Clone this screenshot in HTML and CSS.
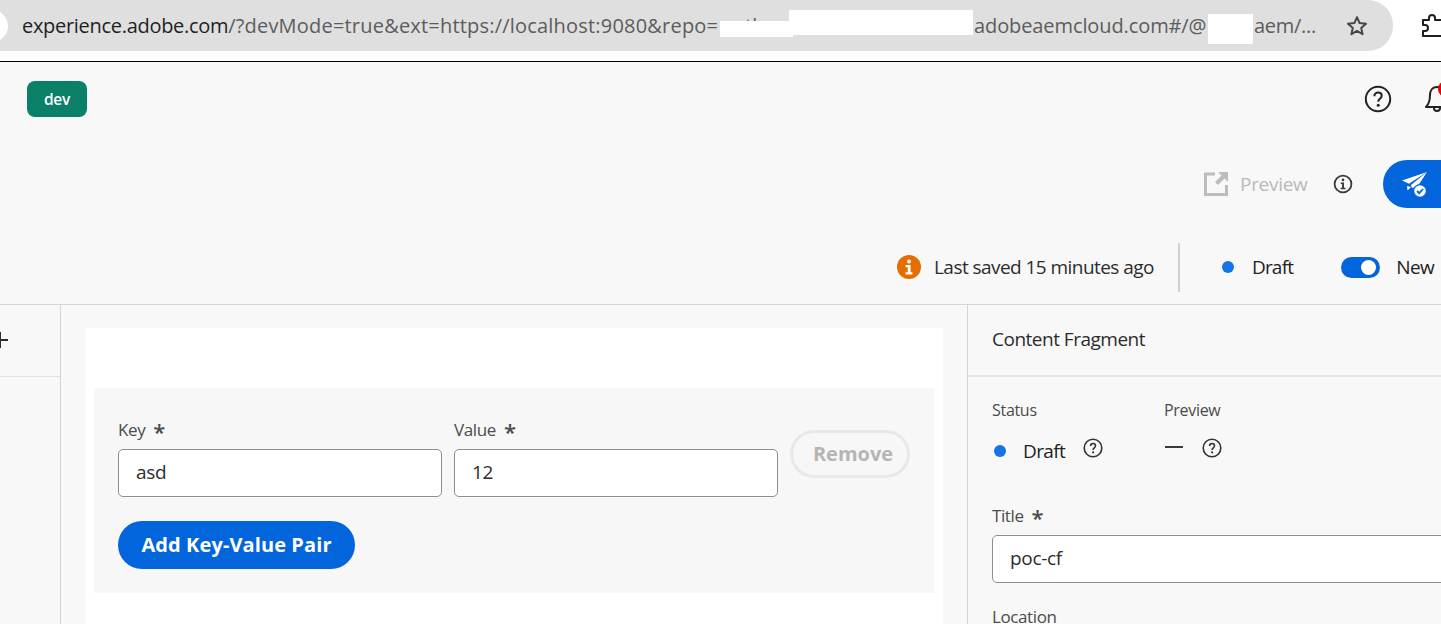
FILE: index.html
```html
<!DOCTYPE html>
<html lang="en">
<head>
<meta charset="utf-8">
<title>Content Fragment</title>
<link rel="stylesheet" href="styles.css">
</head>
<body>
<div class="browser">
  <div class="addressbar">
    <span class="site-dot"></span>
    <span class="url"><span class="host">experience.adobe.com</span>/?devMode=true&amp;ext=https://localhost:9080&amp;repo=</span>
    <span class="url url-th">th</span>
    <span class="mask mask-a"></span>
    <span class="mask mask-b"></span>
    <span class="url url-b">adobeaemcloud.com#/@</span>
    <span class="mask mask-c"></span>
    <span class="url url-c">aem/...</span>
    <svg class="star" viewBox="0 0 24 24" width="24" height="24"><path d="M12 3.200l2.600 5.900 6.400.6-4.800 4.200 1.400 6.300-5.600-3.300-5.600 3.300 1.400-6.300L3 9.700l6.400-.6z" fill="none" stroke="#474747" stroke-width="2" stroke-linejoin="round"/></svg>
  </div>
  <svg class="ext" viewBox="0 0 24 24" width="24" height="24"><path d="M1 6h6V4a3 3 0 0 1 6 0v2h10v16H1v-5h2a2 2 0 0 0 0-6H1z" fill="none" stroke="#1f1f1f" stroke-width="2" stroke-linejoin="round"/></svg>
</div>
<div class="app">
  <header class="topbar">
    <span class="env">dev</span>
    <div class="top-actions">
      <svg class="ico" viewBox="0 0 28 28" width="28" height="28"><circle cx="14" cy="14" r="12.200" fill="none" stroke="#222" stroke-width="2"/><path d="M10.400 11.200c0-2.300 1.600-3.600 3.700-3.600s3.600 1.300 3.600 3.200c0 2.900-3.500 3-3.500 5.900" fill="none" stroke="#222" stroke-width="2"/><circle cx="14.200" cy="20.200" r="1.500" fill="#222"/></svg>
      <span class="bell">
        <svg viewBox="0 0 28 30" width="28" height="30"><path d="M14 3c-5 0-7 4-7 8 0 6-1 9-4 12h22c-3-3-4-6-4-12 0-4-2-8-7-8z" fill="none" stroke="#222" stroke-width="2" stroke-linejoin="round"/><path d="M11 24a3 3 0 0 0 6 0" fill="none" stroke="#222" stroke-width="2"/></svg>
        <span class="bell-badge"></span>
      </span>
    </div>
  </header>
  <div class="toolbar">
    <span class="preview">
      <svg viewBox="0 0 24 24" width="24" height="24"><path d="M11 2H1.500v20.500H22.500V13" fill="none" stroke="#bcbcbc" stroke-width="3"/><path d="M14 0h10v10l-3.500-3.500-6.500 6.500-3-3 6.500-6.500z" fill="#bcbcbc"/></svg>
      Preview
    </span>
    <svg class="info" viewBox="0 0 20 20" width="20" height="20"><circle cx="10" cy="10" r="8.400" fill="none" stroke="#3b3b3b" stroke-width="1.800"/><circle cx="10" cy="5.900" r="1.300" fill="#3b3b3b"/><path d="M7.800 8.600H11v5.200h1.500v1.400H7.600v-1.400h1.500V10H7.800z" fill="#3b3b3b"/></svg>
    <span class="publish">
      <svg viewBox="0 0 28 28" width="28" height="28"><path d="M27 2L2 10.500l7 3.200z" fill="#fff"/><path d="M27 2L11 15l1 3 5.500-1.500z" fill="#fff"/><path d="M7 16l4 1-3.500 3.500z" fill="#fff"/><circle cx="20" cy="21" r="7" fill="#0265dc"/><circle cx="20" cy="21" r="5.800" fill="#fff"/><path d="M17 21l2.200 2.200 3.800-4.200" fill="none" stroke="#0265dc" stroke-width="1.800"/></svg>
    </span>
  </div>
  <div class="statusbar">
    <svg class="warn" viewBox="0 0 24 24" width="24" height="24"><circle cx="12" cy="12" r="12" fill="#e46f00"/><circle cx="12" cy="6.600" r="2" fill="#fff"/><path d="M8.600 10h5v7.200h1.800v2.200H8.600v-2.200h2.200V12.200H8.600z" fill="#fff"/></svg>
    <span class="saved">Last saved 15 minutes ago</span>
    <span class="vrule"></span>
    <span class="dot"></span>
    <span class="draft-top">Draft</span>
    <span class="toggle"><span class="knob"></span></span>
    <span class="new">New</span>
  </div>
  <main class="workspace">
    <aside class="rail">
      <div class="rail-head"><span class="plus"></span></div>
    </aside>
    <section class="canvas">
      <div class="card">
        <div class="pairs">
          <div class="pair">
            <div class="field field-key">
              <label class="label">Key <span class="req">*</span></label>
              <div class="input">asd</div>
            </div>
            <div class="field">
              <label class="label">Value <span class="req">*</span></label>
              <div class="input">12</div>
            </div>
            <span class="remove">Remove</span>
          </div>
          <span class="add">Add Key-Value Pair</span>
        </div>
      </div>
    </section>
    <aside class="panel">
      <div class="panel-head">Content Fragment</div>
      <div class="panel-body">
        <div class="meta">
          <div class="meta-col meta-status">
            <div class="label-sm">Status</div>
            <div class="meta-val">
              <span class="dot"></span><span class="draft">Draft</span>
              <svg class="help" viewBox="0 0 20 20" width="20" height="20"><circle cx="10" cy="10" r="8.800" fill="none" stroke="#333" stroke-width="1.600"/><path d="M7.600 8c0-1.500 1-2.500 2.500-2.500S12.500 6.400 12.500 7.800c0 2-2.400 2.100-2.400 4.200" fill="none" stroke="#333" stroke-width="1.600"/><circle cx="10.100" cy="14.300" r="1.100" fill="#333"/></svg>
            </div>
          </div>
          <div class="meta-col">
            <div class="label-sm">Preview</div>
            <div class="meta-val">
              <span class="dash"></span>
              <svg class="help" viewBox="0 0 20 20" width="20" height="20"><circle cx="10" cy="10" r="8.800" fill="none" stroke="#333" stroke-width="1.600"/><path d="M7.600 8c0-1.500 1-2.500 2.500-2.500S12.500 6.400 12.500 7.800c0 2-2.400 2.100-2.400 4.200" fill="none" stroke="#333" stroke-width="1.600"/><circle cx="10.100" cy="14.300" r="1.100" fill="#333"/></svg>
            </div>
          </div>
        </div>
        <label class="label title-label">Title <span class="req">*</span></label>
        <div class="input title-input">poc-cf</div>
        <div class="location">Location</div>
      </div>
    </aside>
  </main>
</div>
</body>
</html>
```
FILE: styles.css
```css
* { box-sizing: border-box; }
html, body { margin: 0; height: 624px; overflow: hidden; }
body { width: 1441px; background: #fff; font-family: "Open Sans", "Noto Sans", sans-serif; color: #222; }

.browser { height: 62px; border-bottom: 1px solid #000; background: #fff; padding-bottom: 9px; display: flex; }
.addressbar { position: relative; width: 1393px; height: 51px; background: #dfdfdf; border-radius: 0 25px 25px 0; display: flex; align-items: center; padding-left: 22px; flex: none; }
.site-dot { position: absolute; left: -24px; top: 10px; width: 32px; height: 32px; border-radius: 50%; background: #fff; }
.url { font-size: 20px; letter-spacing: 0.2px; color: #5c5c5c; white-space: nowrap; width: 698px; flex: none; }
.host { color: #1f1f1f; letter-spacing: -0.3px; }
.url-th { position: absolute; left: 745px; width: auto; }
.url-b { position: absolute; left: 974px; width: auto; letter-spacing: -0.1px; }
.url-c { position: absolute; left: 1254px; width: auto; letter-spacing: -0.3px; }
.mask { position: absolute; background: #fff; }
.mask-a { left: 720px; top: 21px; width: 73px; height: 16px; }
.mask-b { left: 789px; top: 10px; width: 184px; height: 25px; }
.mask-c { left: 1208px; top: 14px; width: 45px; height: 30px; }
.star { position: absolute; left: 1345px; top: 14px; }
.ext { margin: 14px 0 0 29px; flex: none; }

.app { height: 562px; background: #f8f8f8; display: flex; flex-direction: column; }
.topbar { height: 74px; display: flex; align-items: center; justify-content: space-between; padding: 0 0 0 27px; position: relative; }
.env { width: 60px; height: 36px; border-radius: 8px; background: #0a8069; color: #fff; font-size: 15.500px; font-weight: 600; display: flex; align-items: center; justify-content: center; letter-spacing: -0.3px; }
.top-actions { display: flex; align-items: center; gap: 31px; margin-right: -10px; }
.bell { position: relative; display: block; width: 28px; height: 30px; }
.bell-badge { position: absolute; right: -3px; top: -3px; width: 16px; height: 16px; background: #e60000; border-radius: 50%; }

.toolbar { height: 106px; display: flex; align-items: flex-start; padding: 36px 0 0 1204px; white-space: nowrap; width: 1500px; }
.preview { display: flex; align-items: center; gap: 12px; height: 24px; font-size: 19px; letter-spacing: -0.3px; color: #b9b9b9; }
.info { margin: 2px 0 0 26px; flex: none; }
.publish { width: 110px; height: 48px; margin: -12px 0 0 30px; border-radius: 24px; background: #0265dc; display: flex; align-items: center; padding-left: 17px; flex: none; }

.statusbar { height: 63px; padding: 0 0 13px 897px; display: flex; align-items: center; width: 1500px; white-space: nowrap; font-size: 19px; letter-spacing: -0.55px; }
.saved { margin-left: 13px; color: #2c2c2c; }
.vrule { width: 2px; height: 49px; background: #d0d0d0; margin: 0 0 0 24px; flex: none; }
.dot { width: 12px; height: 12px; border-radius: 50%; background: #1473e6; flex: none; }
.statusbar .dot { margin-left: 42px; }
.draft-top { margin-left: 18px; letter-spacing: -0.8px; }
.toggle { width: 39px; height: 21px; border-radius: 11px; background: #0265dc; margin-left: 48px; position: relative; flex: none; }
.knob { position: absolute; right: 4px; top: 3px; width: 15px; height: 15px; border-radius: 50%; background: #fff; }
.new { margin-left: 16px; }

.workspace { flex: 1; display: flex; border-top: 1px solid #d5d5d5; min-height: 0; margin-top: -1px; }
.rail { width: 61px; border-right: 1px solid #d5d5d5; flex: none; }
.rail-head { height: 72px; border-bottom: 1px solid #e2e2e2; position: relative; }
.plus { position: absolute; left: -8px; top: 27px; width: 16px; height: 16px; background: linear-gradient(#2c2c2c,#2c2c2c) center/16px 2px no-repeat, linear-gradient(#2c2c2c,#2c2c2c) center/2px 16px no-repeat; }
.canvas { width: 907px; flex: none; padding: 23px 0 0 24px; border-right: 1px solid #d5d5d5; }
.card { width: 858px; height: 300px; background: #fff; padding: 60px 9px 0; }
.pairs { height: 205px; background: #f7f7f7; padding: 29px 24px 0; }
.pair { display: flex; gap: 12px; align-items: flex-start; }
.field { width: 324px; }
.label { display: block; font-size: 17px; line-height: 24px; letter-spacing: -0.4px; color: #4b4b4b; height: 32px; padding-top: 1px; white-space: nowrap; }
.req { font-size: 22px; line-height: 16px; vertical-align: -4px; margin-left: 4px; font-weight: 600; }
.input { height: 48px; border: 1px solid #8e8e8e; border-radius: 5px; background: #fff; font-size: 19px; letter-spacing: -0.3px; line-height: 45px; padding-left: 17px; color: #2c2c2c; }
.remove { width: 120px; height: 48px; margin-top: 13px; padding: 0 0 2px 6px; border: 3px solid #e8e8e8; border-radius: 24px; font-size: 20px; font-weight: 700; color: #b5b5b5; display: flex; align-items: center; justify-content: center; flex: none; }
.add { display: flex; width: 237px; height: 48px; margin-top: 24px; padding-bottom: 2px; border-radius: 24px; background: #0265dc; color: #fff; font-size: 20px; font-weight: 700; letter-spacing: 0.1px; align-items: center; justify-content: center; }

.panel { flex: 1; min-width: 0; }
.panel-head { height: 72px; border-bottom: 2px solid #e6e6e6; padding: 21px 0 0 24px; font-size: 19px; letter-spacing: -0.5px; color: #2c2c2c; white-space: nowrap; }
.panel-body { padding: 21px 0 0 24px; }
.meta { display: flex; height: 105px; }
.meta-col { flex: none; }
.meta-status { width: 172px; }
.label-sm { font-size: 16px; letter-spacing: -0.3px; color: #4b4b4b; line-height: 24px; }
.meta-val { display: flex; align-items: center; height: 28px; margin-top: 15px; font-size: 19px; letter-spacing: -0.6px; }
.meta-val .dot { margin-left: 2px; }
.draft { margin-left: 17px; margin-right: 18px; }
.help { margin-top: -6px; }
.dash { width: 18px; height: 2px; background: #3a3a3a; margin: -8px 19px 0 1px; }
.title-label { height: 32px; }
.title-input { width: 470px; border-radius: 5px 0 0 5px; }
.location { font-size: 17px; letter-spacing: -0.4px; color: #4b4b4b; margin-top: 22px; }
```
